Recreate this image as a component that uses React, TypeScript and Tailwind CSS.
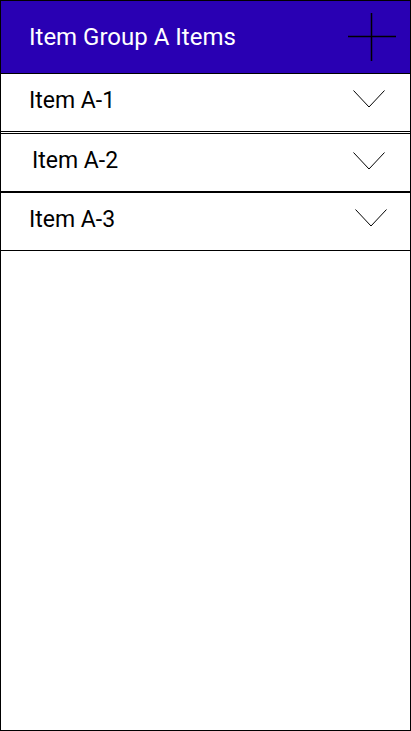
const items = ["Item A-1", "Item A-2", "Item A-3"];

function Chevron() {
  return (
    <svg width="32" height="18" viewBox="0 0 32 18" fill="none" className="shrink-0">
      <path d="M0.5 0.5 L16 17 L31.5 0.5" stroke="#000" strokeWidth="1" />
    </svg>
  );
}

function Plus() {
  return (
    <svg width="48" height="48" viewBox="0 0 48 48" fill="none" className="shrink-0">
      <path d="M23.5 0 V48 M0 23.5 H48" stroke="#000" strokeWidth="1.5" />
    </svg>
  );
}

export default function App() {
  return (
    <div
      className="w-[411px] h-[731px] border border-black bg-white flex flex-col overflow-hidden"
      style={{ fontFamily: "Roboto, 'Noto Sans', sans-serif" }}
    >
      {/* Header */}
      <div className="h-[73px] shrink-0 bg-[#2900b3] border-b border-black flex items-center justify-between pl-[28px] pr-[14px]">
        <span className="text-white text-[24px] leading-none">Item Group A Items</span>
        <Plus />
      </div>

      {/* Rows */}
      <div className="h-[58px] shrink-0 border-b border-black flex items-center justify-between pl-[28px] pr-[25px]">
        <span className="text-black text-[23px] leading-none -mt-[4px]">{items[0]}</span>
        <div className="-mt-[8px]">
          <Chevron />
        </div>
      </div>
      <div className="h-[59px] shrink-0 mt-px border-t border-b border-black flex items-center justify-between pl-[31px] pr-[25px]">
        <span className="text-black text-[23px] leading-none -mt-[4px]">{items[1]}</span>
        <div className="-mt-[4px]">
          <Chevron />
        </div>
      </div>
      <div className="h-[59px] shrink-0 border-t border-b border-black flex items-center justify-between pl-[28px] pr-[23px]">
        <span className="text-black text-[23px] leading-none -mt-[4px]">{items[2]}</span>
        <div className="-mt-[8px]">
          <Chevron />
        </div>
      </div>

      <div className="flex-1" />
    </div>
  );
}
